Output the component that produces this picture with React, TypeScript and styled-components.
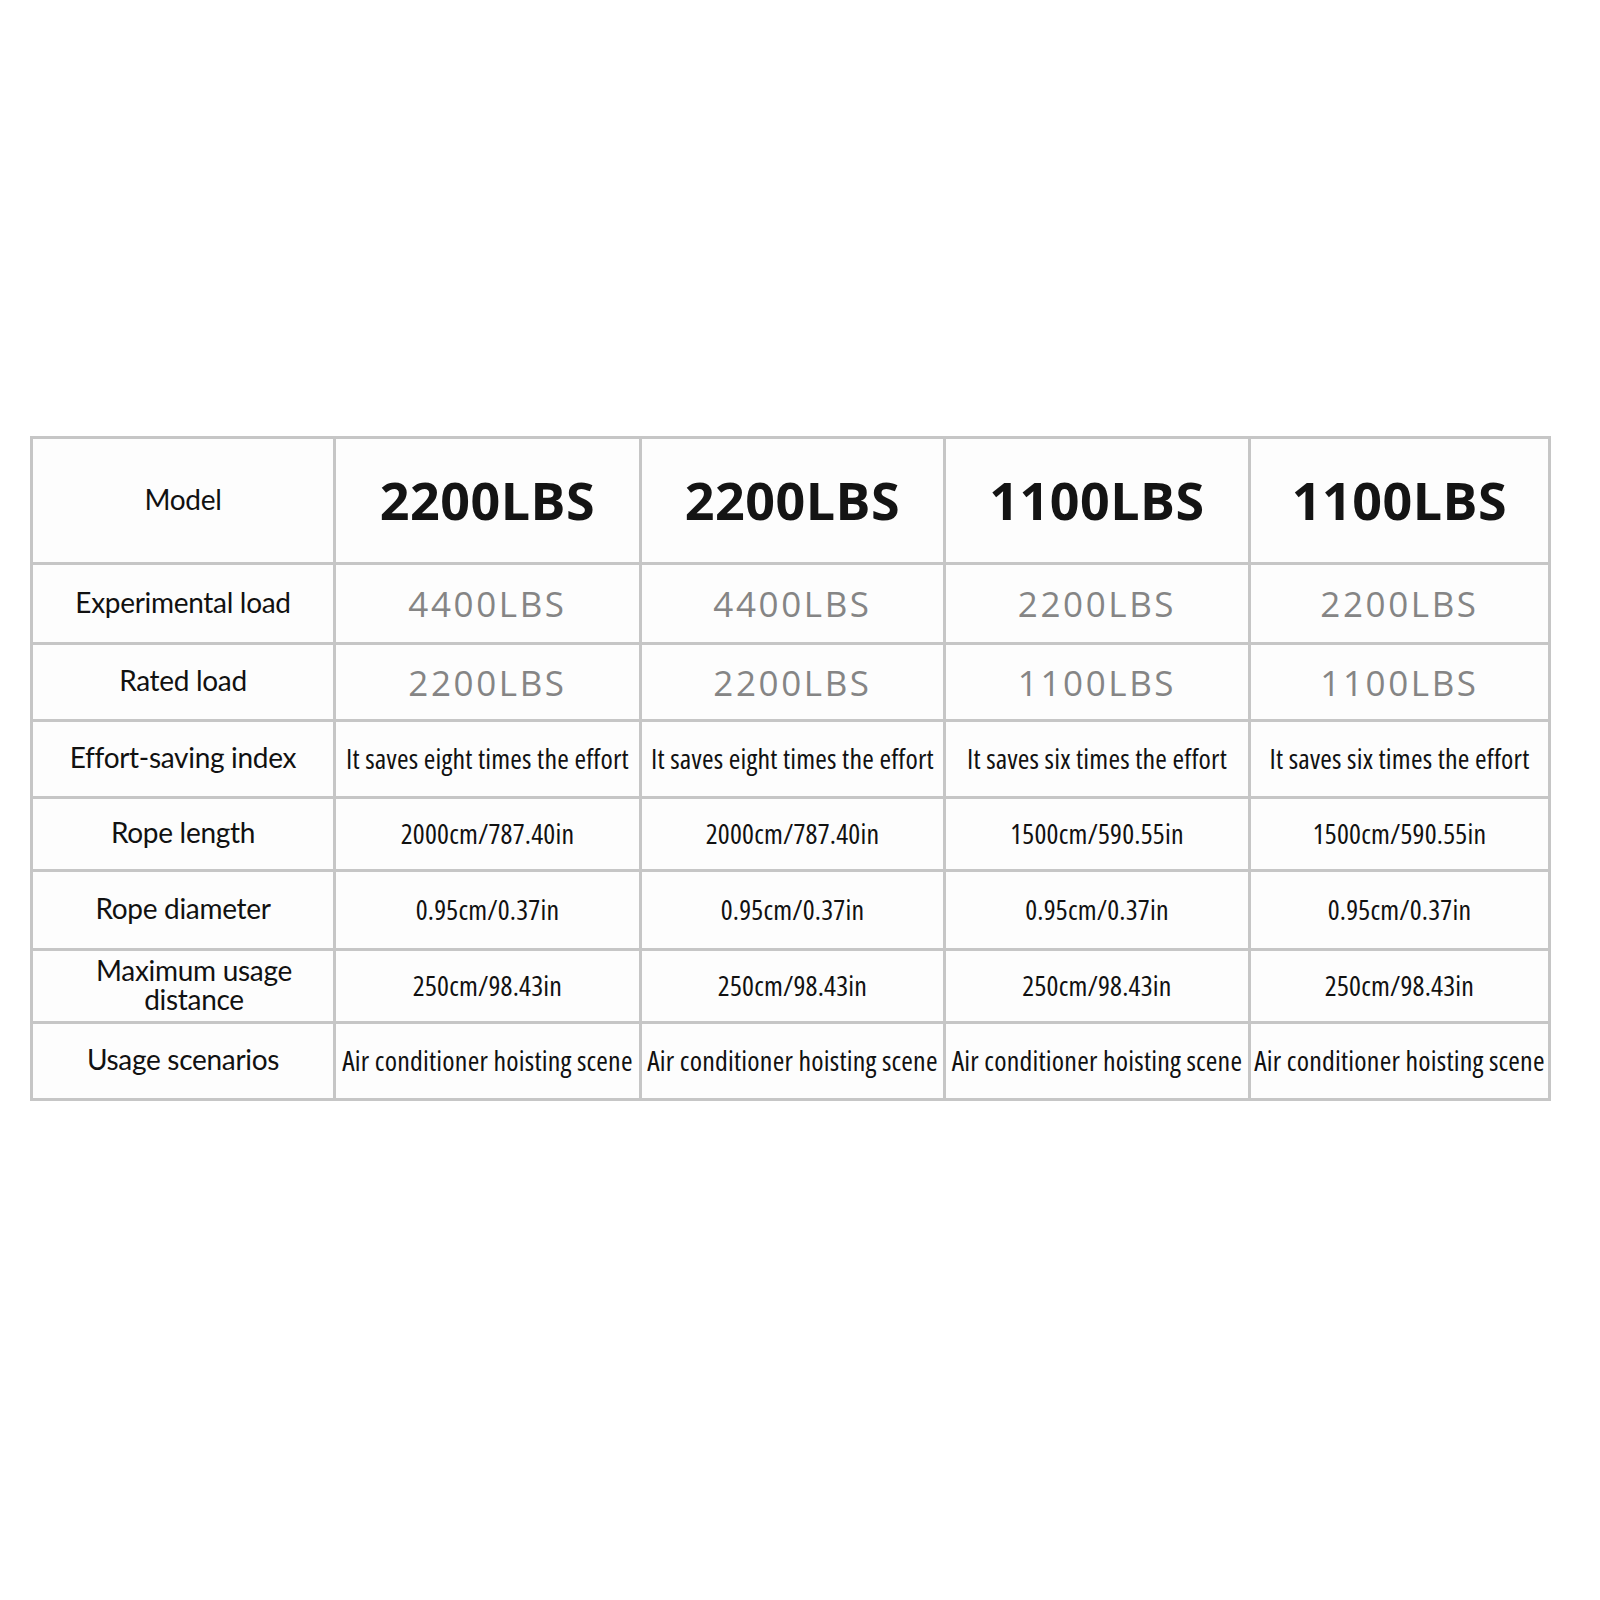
import React from 'react'
import styled, { createGlobalStyle } from 'styled-components'

const GlobalStyle = createGlobalStyle`
  html, body {
    margin: 0;
    padding: 0;
    background: #ffffff;
  }
  body {
    font-family: "Open Sans", "Noto Sans", sans-serif;
  }
`

interface SpecRow {
  label: string[]
  values: string[]
  kind: 'model' | 'load' | 'text'
  height: number
}

const rows: SpecRow[] = [
  { label: ['Model'], values: ['2200LBS', '2200LBS', '1100LBS', '1100LBS'], kind: 'model', height: 126 },
  { label: ['Experimental load'], values: ['4400LBS', '4400LBS', '2200LBS', '2200LBS'], kind: 'load', height: 80 },
  { label: ['Rated load'], values: ['2200LBS', '2200LBS', '1100LBS', '1100LBS'], kind: 'load', height: 77 },
  {
    label: ['Effort-saving index'],
    values: [
      'It saves eight times the effort',
      'It saves eight times the effort',
      'It saves six times the effort',
      'It saves six times the effort',
    ],
    kind: 'text',
    height: 77,
  },
  {
    label: ['Rope length'],
    values: ['2000cm/787.40in', '2000cm/787.40in', '1500cm/590.55in', '1500cm/590.55in'],
    kind: 'text',
    height: 73,
  },
  {
    label: ['Rope diameter'],
    values: ['0.95cm/0.37in', '0.95cm/0.37in', '0.95cm/0.37in', '0.95cm/0.37in'],
    kind: 'text',
    height: 79,
  },
  {
    label: ['Maximum usage', 'distance'],
    values: ['250cm/98.43in', '250cm/98.43in', '250cm/98.43in', '250cm/98.43in'],
    kind: 'text',
    height: 73,
  },
  {
    label: ['Usage scenarios'],
    values: [
      'Air conditioner hoisting scene',
      'Air conditioner hoisting scene',
      'Air conditioner hoisting scene',
      'Air conditioner hoisting scene',
    ],
    kind: 'text',
    height: 77,
  },
]

const Page = styled.div`
  width: 1600px;
  height: 1600px;
  box-sizing: border-box;
  padding: 436px 0 0 30px;
`

const Table = styled.div`
  width: 1521px;
  display: grid;
  grid-template-columns: 303px 306px 304px 305px 300px;
  border-top: 3px solid #c6c6c6;
  border-left: 3px solid #c6c6c6;
  box-sizing: border-box;
  background: #fdfdfd;
`

const Cell = styled.div<{ $h: number; $shift?: number }>`
  height: ${(p) => p.$h}px;
  box-sizing: border-box;
  border-right: 3px solid #c6c6c6;
  border-bottom: 3px solid #c6c6c6;
  padding-left: ${(p) => p.$shift ?? 0}px;
  padding-bottom: 3px;
  display: flex;
  flex-direction: column;
  align-items: center;
  justify-content: center;
  text-align: center;
  white-space: nowrap;
  overflow: hidden;
`

const Label = styled.span`
  display: block;
  font-family: Lato, "Open Sans", sans-serif;
  font-size: 28px;
  line-height: 29px;
  color: #111;
  letter-spacing: -0.3px;
`

const ModelValue = styled.span`
  font-family: "Open Sans", sans-serif;
  font-weight: 700;
  font-size: 52px;
  color: #141414;
  letter-spacing: 0.5px;
`

const LoadValue = styled.span`
  font-family: "Open Sans", sans-serif;
  font-size: 35px;
  color: #858585;
  letter-spacing: 2.6px;
  padding-top: 3px;
`

const TextValue = styled.span`
  font-family: "Open Sans", sans-serif;
  font-stretch: 75%;
  font-size: 28px;
  color: #111;
  letter-spacing: 0.2px;
`

function renderValue(kind: SpecRow['kind'], v: string) {
  if (kind === 'model') return <ModelValue>{v}</ModelValue>
  if (kind === 'load') return <LoadValue>{v}</LoadValue>
  return <TextValue>{v}</TextValue>
}

export default function App() {
  return (
    <>
      <GlobalStyle />
      <Page>
        <Table>
          {rows.map((row, i) => (
            <React.Fragment key={i}>
              <Cell $h={row.height} $shift={row.label.length > 1 ? 22 : 0}>
                <Label>
                  {row.label.map((line, k) => (
                    <React.Fragment key={line}>
                      {k > 0 && <br />}
                      {line}
                    </React.Fragment>
                  ))}
                </Label>
              </Cell>
              {row.values.map((v, j) => (
                <Cell key={j} $h={row.height}>
                  {renderValue(row.kind, v)}
                </Cell>
              ))}
            </React.Fragment>
          ))}
        </Table>
      </Page>
    </>
  )
}
